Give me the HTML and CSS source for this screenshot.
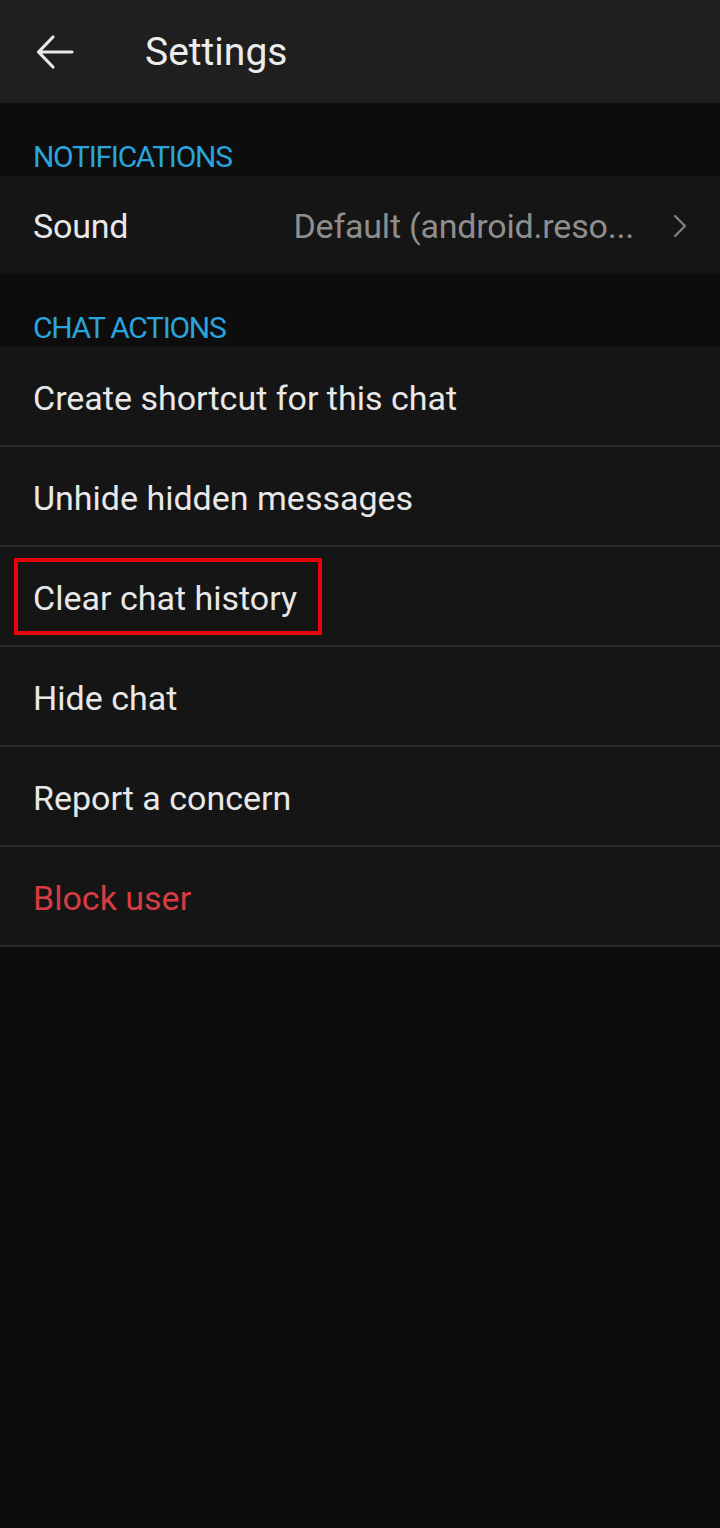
FILE: index.html
```html
<!DOCTYPE html>
<html lang="en">
<head>
    <meta charset="UTF-8">
    <meta name="viewport" content="width=device-width, initial-scale=1.0">
    <title>Settings</title>
    <link rel="stylesheet" href="styles.css">
</head>
<body>
    <header class="topbar">
        <button class="back" aria-label="Back">
            <svg width="40" height="40" viewBox="0 0 40 40">
                <path d="M37 20H4M18 5L3.5 20L18 35" fill="none" stroke="#e9e9e9" stroke-width="3.2" stroke-linecap="round" stroke-linejoin="round"/>
            </svg>
        </button>
        <h1>Settings</h1>
    </header>

    <div class="group-title">NOTIFICATIONS</div>
    <div class="group">
        <div class="row sound">
            <span>Sound</span>
            <span class="value">Default (android.reso...</span>
            <svg class="chevron" width="16" height="28" viewBox="0 0 16 28">
                <path d="M3 4L13 14L3 24" fill="none" stroke="#7d7d7d" stroke-width="2.4" stroke-linecap="round" stroke-linejoin="round"/>
            </svg>
        </div>
    </div>

    <div class="group-title">CHAT ACTIONS</div>
    <ul class="list">
        <li>Create shortcut for this chat</li>
        <li>Unhide hidden messages</li>
        <li><span class="marked">Clear chat history</span></li>
        <li>Hide chat</li>
        <li>Report a concern</li>
        <li class="danger">Block user</li>
    </ul>
</body>
</html>
```

FILE: styles.css
```css
/* General Styles */
body {
    font-family: Roboto, 'Noto Sans', sans-serif;
    background: #0d0d0d;
    color: #e8e8e8;
    margin: 0;
    padding: 0;
    min-height: 100vh;
}

/* Top bar */
.topbar {
    height: 103px;
    background: #1f1f1f;
    display: flex;
    align-items: center;
}

.back {
    background: none;
    border: 0;
    padding: 0;
    margin: 0 0 0 35px;
    width: 40px;
    height: 40px;
    display: flex;
}

h1 {
    margin: 0 0 0 70px;
    font-size: 39px;
    font-weight: 400;
    color: #ececec;
}

/* Section headings */
.group-title {
    height: 73px;
    box-sizing: border-box;
    padding: 0 0 2px 33px;
    display: flex;
    align-items: flex-end;
    color: #2aa4dc;
    font-size: 30px;
    letter-spacing: -1.3px;
}

/* Rows */
.group {
    background: #151515;
}

.row {
    height: 98px;
    box-sizing: border-box;
    padding: 2px 32px 0 33px;
    display: flex;
    align-items: center;
    font-size: 34px;
    letter-spacing: -0.2px;
}

.value {
    margin-left: auto;
    color: #8e8e8e;
}

.chevron {
    margin-left: 38px;
}

.list {
    list-style-type: none;
    padding: 0;
    margin: 0;
    background: #151515;
}

.list li {
    height: 100px;
    box-sizing: border-box;
    display: flex;
    align-items: center;
    padding: 4px 0 0 33px;
    font-size: 34px;
    border-bottom: 2px solid #2a2a2a;
}

.list li.danger {
    color: #d83c42;
}

.marked {
    position: relative;
}

.marked::after {
    content: "";
    position: absolute;
    left: -19px;
    right: -25px;
    top: -20px;
    bottom: -17px;
    border: 4px solid #e8000c;
}
```
